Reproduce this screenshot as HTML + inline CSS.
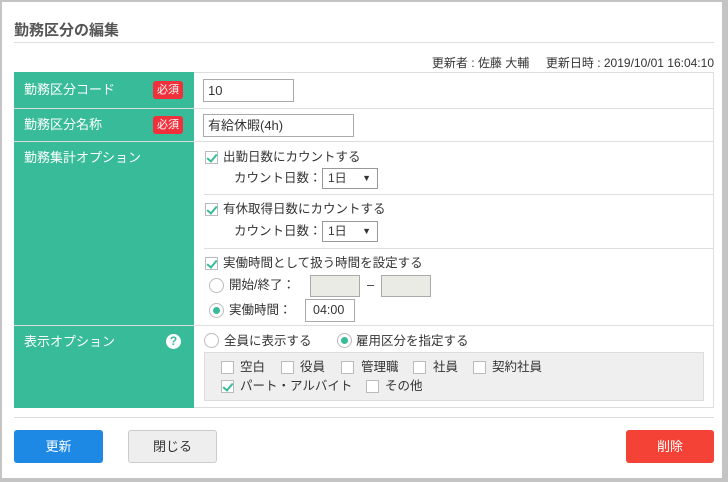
<!DOCTYPE html>
<html><head><meta charset="utf-8"><style>
*{box-sizing:border-box;margin:0;padding:0}
body{width:728px;height:482px;background:#c4c4c4;font-family:"Liberation Sans","Noto Sans CJK JP",sans-serif;color:#333;font-size:12px;position:relative;overflow:hidden}
.a{position:absolute}
.box{left:2px;top:2px;width:720px;height:476px;background:#fff}
.lbl{background:#37bb99;color:#fff;font-size:13px}
.req{background:#f0303a;color:#fff;font-size:11px;width:30px;height:18px;line-height:18px;text-align:center;border-radius:3px}
.inp{border:1px solid #aaa;height:23px;background:#fff;font-size:13px;line-height:21px;padding-left:4px}
.cb{width:13px;height:13px;border:1px solid #bbb;background:#fff}
.ck::after{content:"";position:absolute;left:3px;top:0px;width:4px;height:8px;border:solid #37bb99;border-width:0 2px 2px 0;transform:rotate(40deg)}
.rd{width:15px;height:15px;border:1px solid #bbb;border-radius:50%;background:#fff}
.rd.on::after{content:"";position:absolute;left:3px;top:3px;width:7px;height:7px;border-radius:50%;background:#37bb99}
.t{font-size:12.5px;line-height:14px;white-space:nowrap}
.sel{border:1px solid #999;width:56px;height:21px;font-size:12px;line-height:19px;padding-left:5px;background:#fff}
.sel::after{content:"▼";position:absolute;right:6px;top:0;font-size:9px}
.hl{height:1px;background:#ddd}
.btn{height:33px;line-height:33px;text-align:center;font-size:13px;border-radius:3px}
</style></head><body>
<div class="a box"></div>
<div class="a" style="left:14px;top:19px;font-size:15px;font-weight:bold;color:#555">勤務区分の編集</div>
<div class="a hl" style="left:14px;top:42px;width:700px"></div>
<div class="a" style="right:14px;top:54px;font-size:12px;color:#333;white-space:nowrap">更新者 : 佐藤 大輔 &nbsp;&nbsp;&nbsp; 更新日時 : 2019/10/01 16:04:10</div>

<div class="a" style="left:14px;top:72px;width:700px;height:336px;border:1px solid #ddd"></div>
<div class="a lbl" style="left:14px;top:72px;width:180px;height:336px"></div>
<div class="a hl" style="left:14px;top:108px;width:700px;background:#ddd"></div>
<div class="a hl" style="left:14px;top:141px;width:700px"></div>
<div class="a hl" style="left:14px;top:325px;width:700px"></div>
<div class="a lbl" style="left:24px;top:79px">勤務区分コード</div>
<div class="a req" style="left:153px;top:81px">必須</div>
<div class="a lbl" style="left:24px;top:114px">勤務区分名称</div>
<div class="a req" style="left:153px;top:116px">必須</div>
<div class="a lbl" style="left:24px;top:147px">勤務集計オプション</div>
<div class="a lbl" style="left:24px;top:331px">表示オプション</div>
<div class="a" style="left:166px;top:334px;width:15px;height:15px;border-radius:50%;background:#fff;color:#37bb99;font-weight:bold;font-size:12px;text-align:center;line-height:15px">?</div>

<div class="a inp" style="left:203px;top:79px;width:91px">10</div>
<div class="a inp" style="left:203px;top:114px;width:151px">有給休暇(4h)</div>

<div class="a cb ck" style="left:205px;top:151px"></div>
<div class="a t" style="left:223px;top:150px">出勤日数にカウントする</div>
<div class="a t" style="left:234px;top:171px">カウント日数：</div>
<div class="a sel" style="left:322px;top:168px">1日</div>
<div class="a hl" style="left:204px;top:194px;width:510px"></div>
<div class="a cb ck" style="left:205px;top:203px"></div>
<div class="a t" style="left:223px;top:202px">有休取得日数にカウントする</div>
<div class="a t" style="left:234px;top:224px">カウント日数：</div>
<div class="a sel" style="left:322px;top:221px">1日</div>
<div class="a hl" style="left:204px;top:248px;width:510px"></div>
<div class="a cb ck" style="left:205px;top:257px"></div>
<div class="a t" style="left:223px;top:256px">実働時間として扱う時間を設定する</div>
<div class="a rd" style="left:209px;top:278px"></div>
<div class="a t" style="left:229px;top:278px">開始/終了：</div>
<div class="a inp" style="left:310px;top:275px;width:50px;height:22px;background:#ebebe6;border-color:#aaa"></div>
<div class="a t" style="left:367px;top:278px">–</div>
<div class="a inp" style="left:381px;top:275px;width:50px;height:22px;background:#ebebe6;border-color:#aaa"></div>
<div class="a rd on" style="left:209px;top:303px"></div>
<div class="a t" style="left:229px;top:303px">実働時間：</div>
<div class="a inp" style="left:305px;top:299px;width:50px;height:23px;font-size:12.5px;padding-left:7px">04:00</div>

<div class="a rd" style="left:204px;top:333px"></div>
<div class="a t" style="left:224px;top:334px">全員に表示する</div>
<div class="a rd on" style="left:337px;top:333px"></div>
<div class="a t" style="left:356px;top:334px">雇用区分を指定する</div>
<div class="a" style="left:204px;top:352px;width:500px;height:49px;background:#efefef;border:1px solid #ddd"></div>
<div class="a cb" style="left:221px;top:361px"></div><div class="a t" style="left:240px;top:360px">空白</div>
<div class="a cb" style="left:281px;top:361px"></div><div class="a t" style="left:300px;top:360px">役員</div>
<div class="a cb" style="left:341px;top:361px"></div><div class="a t" style="left:361px;top:360px">管理職</div>
<div class="a cb" style="left:413px;top:361px"></div><div class="a t" style="left:433px;top:360px">社員</div>
<div class="a cb" style="left:473px;top:361px"></div><div class="a t" style="left:492px;top:360px">契約社員</div>
<div class="a cb ck" style="left:221px;top:380px"></div><div class="a t" style="left:240px;top:379px">パート・アルバイト</div>
<div class="a cb" style="left:366px;top:380px"></div><div class="a t" style="left:385px;top:379px">その他</div>

<div class="a hl" style="left:14px;top:417px;width:700px"></div>
<div class="a btn" style="left:14px;top:430px;width:89px;background:#1e88e5;color:#fff">更新</div>
<div class="a btn" style="left:128px;top:430px;width:89px;background:#eee;border:1px solid #ccc;color:#333;line-height:31px">閉じる</div>
<div class="a btn" style="left:626px;top:430px;width:88px;background:#f44336;color:#fff">削除</div>
</body></html>
